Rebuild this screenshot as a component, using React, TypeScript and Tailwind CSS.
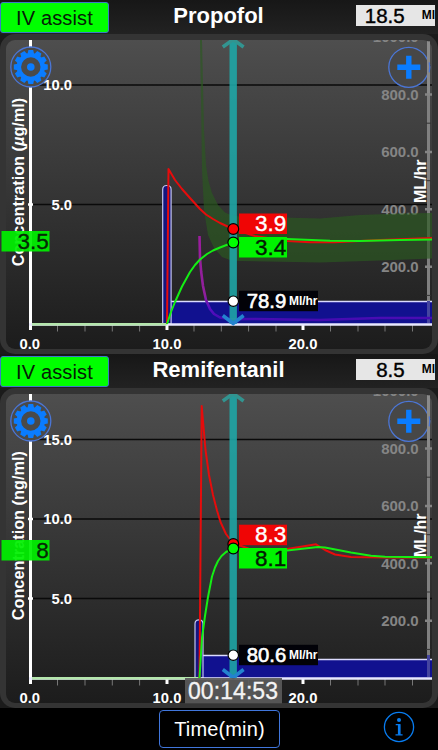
import React from 'react';

interface Drug {
  id: string;
  name: string;
  volume: string;
  unit: string;
  target: string;
  targetY: number;
  yTicks: { label: string; y: number }[];
  bolus: { x: number; width: number; y: number };
  infusion: string;
  infusionTop: string;
  plasma: string;
  effect: string;
  plasmaValue: string;
  effectValue: string;
  plasmaY: number;
  effectY: number;
  plasmaTagY: number;
  effectTagY: number;
  rate: string;
  band?: string;
  ghost?: string;
}

const drugs: Drug[] = [
  {
    id: 'propofol',
    name: 'Propofol',
    volume: '18.5',
    unit: 'µg/ml',
    target: '3.5',
    targetY: 231,
    yTicks: [
      { label: '10.0', y: 85 },
      { label: '5.0', y: 204.5 },
    ],
    bolus: { x: 162.7, width: 8.4, y: 185.5 },
    infusion: 'M167 301.5H432V324H167Z',
    infusionTop: 'M167 301.5H432',
    plasma:
      'M167 324L168.5 169L175 180L182 189L190 198L200 209L206 214.5L213 219L220 223L233 229L255 236L287 241L310 242.3L335 242.3L380 240L432 238',
    effect:
      'M167 324L171 312L175 302L182 286.5L190 272L195 265L200 259.5L207 254L213 250.5L220 247.5L233 242.5L260 238.5L287 239L330 240.8L360 241L400 240L432 239.5',
    plasmaValue: '3.9',
    effectValue: '3.4',
    plasmaY: 229,
    effectY: 242.5,
    plasmaTagY: 213.5,
    effectTagY: 237,
    rate: '78.9',
    band:
      'M200 40L202 40L204 130L206 165L208.5 181L212 193L218 205L225 212.5L232 215.5L240 216.5L320 218.5L360 215L400 213.5L432 213V258.5L380 260.5L320 262.5L240 261L230 260L222 257L214 248L208 235L204 210L202 170L201 100Z',
    ghost: 'M199.5 236L200 258L201.2 272L203 286L206 300L210 309L214 314L220 317.5L230 319.3L255 319L320 320L380 318L432 318',
  },
  {
    id: 'remifentanil',
    name: 'Remifentanil',
    volume: '8.5',
    unit: 'ng/ml',
    target: '8',
    targetY: 186,
    yTicks: [
      { label: '15.0', y: 85.5 },
      { label: '10.0', y: 165 },
      { label: '5.0', y: 244.5 },
    ],
    bolus: { x: 195, width: 8, y: 265.8 },
    infusion: 'M202 301.5H250V305.5H432V324H202Z',
    infusionTop: 'M202 301.5H250V305.5H432',
    plasma:
      'M199.5 324L201.7 52L205.5 96L209 121L213 141L217 156.5L220.5 168L226 180L233 189L255 197L270 197L287 195L316 190.3L325 196L335 200.5L351 203L385 203.5L432 203.5',
    effect:
      'M199.5 324L202 284L205 262L208 243L212 222.5L215 213.5L218 207L221.5 202L226 198L233 194.5L260 197.5L287 196.5L318 193L325 193.5L351 198.5L371 201.7L385 202.8L432 203.2',
    plasmaValue: '8.3',
    effectValue: '8.1',
    plasmaY: 190,
    effectY: 194.5,
    plasmaTagY: 170.7,
    effectTagY: 194,
    rate: '80.6',
  },
];

const rateTicks = [
  { label: '1000.0', y: 37 },
  { label: '800.0', y: 94.5 },
  { label: '600.0', y: 152 },
  { label: '400.0', y: 209.3 },
  { label: '200.0', y: 266.7 },
];

const minorX = [57.5, 85, 112.3, 139.6, 194, 221.3, 248.6, 276, 330.5, 358, 385, 412.5];
const teeth = [0, 30, 60, 90, 120, 150, 180, 210, 240, 270, 300, 330];

const GearButton: React.FC = () => (
  <g transform="translate(30.8 67)">
    <circle r="20" fill="#4a4a4a" stroke="#4b76d6" strokeWidth="1.3" />
    <circle r="11.9" fill="none" stroke="#0a7cff" strokeWidth="4.4" />
    {teeth.map((a) => (
      <path key={a} d="M-3.3 -13L-2.4 -17H2.4L3.3 -13Z" fill="#0a7cff" transform={`rotate(${a})`} />
    ))}
    <circle r="3.8" fill="#0a7cff" />
  </g>
);

const PlusButton: React.FC = () => (
  <g transform="translate(408.8 67.3)">
    <circle r="20" fill="#474747" stroke="#4b76d6" strokeWidth="1.3" />
    <path d="M-11.5 0H11.5M0 -11.5V11.5" stroke="#0a7cff" strokeWidth="5.4" />
    <path d="M19.7 -26V26" stroke="#8a8a8a" strokeWidth="3" />
    <path d="M20.4 -5A20 20 0 0 1 20.4 5" fill="none" stroke="#4b76d6" strokeWidth="1.3" />
  </g>
);

const Chart: React.FC<{ drug: Drug; clock?: string }> = ({ drug, clock }) => (
  <svg viewBox="0 34 438 320" className="block h-[320px] w-full font-['Liberation_Sans',Arial,sans-serif]">
    <defs>
      <linearGradient id={`${drug.id}-bg`} x1="0" y1="0" x2="0" y2="1">
        <stop offset="0" stopColor="#4e4e4e" />
        <stop offset="1" stopColor="#1c1c1c" />
      </linearGradient>
      <linearGradient id={`${drug.id}-ghost`} gradientUnits="userSpaceOnUse" x1="0" y1="236" x2="0" y2="320">
        <stop offset="0" stopColor="#9c1c9e" />
        <stop offset="0.7" stopColor="#8f209b" />
        <stop offset="0.85" stopColor="#5a0fc4" />
        <stop offset="1" stopColor="#450bb0" />
      </linearGradient>
      <clipPath id={`${drug.id}-clip`}>
        <rect x="6" y="40" width="426" height="309" rx="9" />
      </clipPath>
    </defs>

    <rect x="0" y="34" width="438" height="320" rx="15" fill="#343434" />
    <rect x="6" y="40" width="426" height="309" rx="9" fill={`url(#${drug.id}-bg)`} />

    <g clipPath={`url(#${drug.id}-clip)`}>
      {drug.yTicks.map((t) => (
        <path key={t.label} d={`M32 ${t.y}H432`} stroke="#0a0a0a" strokeWidth="1.6" />
      ))}

      {/* vertical axes */}
      <path d="M30.5 39.5V330" stroke="#fff" strokeWidth="3" />
      <path d="M428.5 41V323" stroke="#808080" strokeWidth="3" />
      {drug.yTicks.map((t) => (
        <path key={t.label} d={`M28 ${t.y}H33`} stroke="#fff" strokeWidth="2.4" />
      ))}
      {rateTicks.map((t) => (
        <g key={t.label}>
          <path d={`M425 ${t.y}H432`} stroke="#858585" strokeWidth="2.4" />
          <path d={`M426 ${t.y + 28.7}H431`} stroke="#333" strokeWidth="1" />
          <text x="418.7" y={t.y + 5.2} textAnchor="end" fontSize="15" fontWeight="bold" fill="#858585">
            {t.label}
          </text>
        </g>
      ))}
      {drug.yTicks.map((t) => (
        <text key={t.label} x="72" y={t.y + 5} textAnchor="end" fontSize="14.8" fontWeight="bold" fill="#fff">
          {t.label}
        </text>
      ))}

      {/* time axis */}
      {minorX.map((x) => (
        <path key={x} d={`M${x} 325V331.5`} stroke="#777" strokeWidth="1" />
      ))}
      <path d="M167 324V330M303 324V330" stroke="#fff" strokeWidth="3" />
      <g fontSize="14.8" fontWeight="bold" fill="#fff" textAnchor="middle">
        <text x="29.8" y="348.8">0.0</text>
        <text x="167" y="348.8">10.0</text>
        <text x="303" y="348.8">20.0</text>
      </g>

      {/* infusion and bolus */}
      <path d={drug.infusion} fill="#11118f" />
      <path d={drug.infusionTop} fill="none" stroke="#dcdcff" strokeWidth="1.4" />
      <path d="M428.5 301V323" stroke="#4545a0" strokeWidth="3" />
      <path
        d={`M${drug.bolus.x} 324V${drug.bolus.y + 4}q0 -4 4 -4H${drug.bolus.x + drug.bolus.width - 4}q4 0 4 4V324Z`}
        fill="#15157f"
        stroke="#c4c4ee"
        strokeWidth="1.2"
      />

      {drug.band && <path d={drug.band} fill="#2a5a20" fillOpacity="0.66" />}
      {drug.ghost && (
        <path d={drug.ghost} fill="none" stroke={`url(#${drug.id}-ghost)`} strokeWidth="2.6" strokeLinejoin="round" />
      )}

      <path d="M29 324.5H432" stroke="#e8e8ff" strokeWidth="2.4" />
      <path d={`M32 324.3H${drug.bolus.x + 4}`} stroke="#b4e6ac" strokeWidth="2.4" />
      <path d={drug.plasma} fill="none" stroke="#e60c0c" strokeWidth="2" strokeLinejoin="round" />
      <path d={drug.effect} fill="none" stroke="#14ee14" strokeWidth="2" strokeLinejoin="round" />

      {/* time cursor */}
      <path d="M233.2 40V324" stroke="#1fa5a5" strokeWidth="7.4" strokeOpacity="0.9" />
      <path d="M222.8 47L233.2 39.5L243.6 47" fill="none" stroke="#329490" strokeWidth="3.6" />
      <path d="M222.8 315.5L233.2 323.5L243.6 315.5" fill="none" stroke="#2383cf" strokeWidth="3.6" />
    </g>

    <text transform="translate(24 266.3) rotate(-90)" fontSize="16.3" fontWeight="bold" fill="#fff">
      {drug.id === 'propofol' ? (
        <>
          Concentration (<tspan fontStyle="italic">µ</tspan>g/ml)
        </>
      ) : (
        `Concentration (${drug.unit})`
      )}
    </text>
    <text transform="translate(425.5 203) rotate(-90)" fontSize="16" fontWeight="bold" fill="#fff">
      ML/hr
    </text>

    <GearButton />
    <PlusButton />

    {/* target tag on the axis */}
    <rect x="1.5" y={drug.targetY} width="48" height="20.5" fill="#00f000" fillOpacity="0.93" />
    <text
      x="48.8"
      y={drug.targetY + 17.6}
      textAnchor="end"
      fontSize="22.5"
      fill="#062806"
      stroke="#062806"
      strokeWidth="0.3"
    >
      {drug.target}
    </text>

    {/* values under the cursor */}
    <rect x="239" y={drug.plasmaTagY} width="48" height="20.5" fill="#f00505" />
    <text x="286.3" y={drug.plasmaTagY + 17.6} textAnchor="end" fontSize="22.5" fill="#fff" stroke="#fff" strokeWidth="0.4">
      {drug.plasmaValue}
    </text>
    <rect x="239" y={drug.effectTagY} width="48" height="20.5" fill="#00f400" />
    <text x="286.3" y={drug.effectTagY + 17.6} textAnchor="end" fontSize="22.5" fill="#031c03" stroke="#031c03" strokeWidth="0.4">
      {drug.effectValue}
    </text>
    <rect x="239" y="290.8" width="79" height="20.4" fill="#020208" />
    <text x="286.3" y="308.2" textAnchor="end" fontSize="20.3" fill="#fff" stroke="#fff" strokeWidth="0.6">
      {drug.rate}
    </text>
    <text x="289" y="305" fontSize="12" fontWeight="bold" fill="#fff" textLength="28.5">
      Ml/hr
    </text>

    <g stroke="#000" strokeWidth="1.2">
      <circle cx="233.3" cy={drug.plasmaY} r="5.4" fill="#ff0000" />
      <circle cx="233.3" cy={drug.effectY} r="5.4" fill="#00ff00" />
      <circle cx="233.3" cy="301.2" r="5.2" fill="#fff" />
    </g>

    {clock && (
      <g>
        <rect x="185" y="324" width="97" height="25.3" fill="#5a5a5a" fillOpacity="0.92" />
        <text x="188" y="345" fontSize="23" fill="#f4f4f4" stroke="#f4f4f4" strokeWidth="0.3" textLength="90">
          {clock}
        </text>
      </g>
    )}
  </svg>
);

const DrugPanel: React.FC<{ drug: Drug; clock?: string }> = ({ drug, clock }) => (
  <section className="h-[354px] bg-[#1b1b1b]">
    <header className="grid h-[34px] grid-cols-[109px_219px_1fr] items-start bg-linear-to-b from-[#171717] to-[#222222] pr-[3px]">
      <button className="mt-[2px] h-[31px] w-[109px] rounded-[3px] border border-[#3b7ac8] bg-[#00ff00] text-[20px] leading-[28px] tracking-[0.15px] text-[#062006]">
        IV assist
      </button>
      <h2 className="mt-[3px] text-center text-[22px] leading-[26px] font-bold text-white">{drug.name}</h2>
      <div className="mt-[5px] flex h-[21px] w-[79px] justify-end justify-self-end bg-[#e6e6e6] text-black">
        <span className="-mt-[2px] mr-[17px] text-[20.5px] leading-[25px] [-webkit-text-stroke:0.4px_black]">{drug.volume}</span>
        <span className="text-[12px] leading-[21px] font-bold">Ml</span>
      </div>
    </header>
    <Chart drug={drug} clock={clock} />
  </section>
);

const App: React.FC = () => {
  return (
    <main className="flex h-[750px] w-[438px] flex-col overflow-hidden bg-black font-['Liberation_Sans',Arial,sans-serif]">
      <DrugPanel drug={drugs[0]} />
      <DrugPanel drug={drugs[1]} clock="00:14:53" />
      <footer className="grid h-[42px] grid-cols-[1fr_122px_1fr] items-center">
        <span />
        <button className="ml-px h-[38px] rounded-[4px] border border-[#4076dc] text-[20px] leading-[37px] tracking-[0.15px] text-white">
          Time(min)
        </button>
        <button className="mr-[23px] -mt-[4px] justify-self-end" aria-label="Info">
          <svg viewBox="0 0 32 32" className="block size-8" fill="none" stroke="#087cf0">
            <circle cx="16" cy="16" r="14.6" strokeWidth="1.3" />
            <circle cx="16" cy="9" r="2" fill="#087cf0" stroke="none" />
            <path d="M12.7 13.6H16.6V23.6M12.5 23.8H19.6" strokeWidth="1.2" />
            <path d="M16.2 13.2V23.8" strokeWidth="2.6" />
          </svg>
        </button>
      </footer>
    </main>
  );
};

export default App;
